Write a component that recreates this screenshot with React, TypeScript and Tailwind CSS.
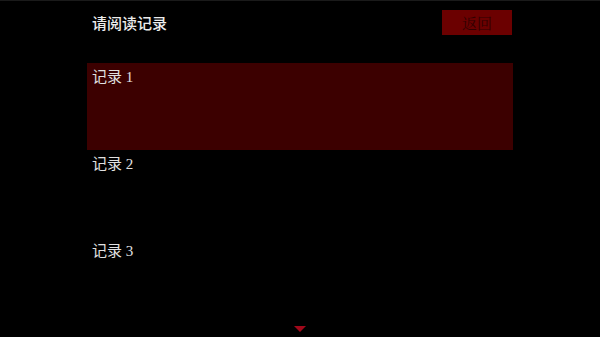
const records = ["记录 1", "记录 2", "记录 3"];

export default function App() {
  return (
    <div className="w-[600px] h-[337px] bg-black overflow-hidden flex flex-col items-center border-t border-[#1a1a1a]">
      <div className="w-[426px] flex flex-col flex-1">
        <div className="h-[62px] flex items-start justify-between pt-[9px]">
          <div
            className="pl-[5px] pt-[3px] text-[15px] leading-[20px] text-[#ececec] font-medium"
            style={{ fontFamily: '"Noto Sans CJK SC", sans-serif' }}
          >
            请阅读记录
          </div>
          <button
            className="w-[70px] h-[25px] mr-[1px] bg-[#6b0000] text-[#300000] text-[15px] leading-[25px] text-center"
            style={{ fontFamily: '"Noto Serif CJK SC", "Noto Sans CJK SC", serif' }}
          >
            返回
          </button>
        </div>
        <div className="flex flex-col">
          {records.map((r, i) => (
            <div
              key={r}
              className={
                i === 0
                  ? "h-[87px] bg-[#3c0000] pl-[5px] pt-[4px] text-[15px] leading-[20px] text-[#e0e0e0]"
                  : "h-[87px] pl-[5px] pt-[4px] text-[15px] leading-[20px] text-[#e0e0e0]"
              }
              style={{ fontFamily: '"Liberation Serif", "Noto Sans CJK SC", serif' }}
            >
              {r}
            </div>
          ))}
        </div>
        <div className="flex-1 flex items-end justify-center pb-[5px]">
          <svg width="12" height="6" viewBox="0 0 12 6">
            <polygon points="0,0 12,0 6,6" fill="#a0081a" />
          </svg>
        </div>
      </div>
    </div>
  );
}
